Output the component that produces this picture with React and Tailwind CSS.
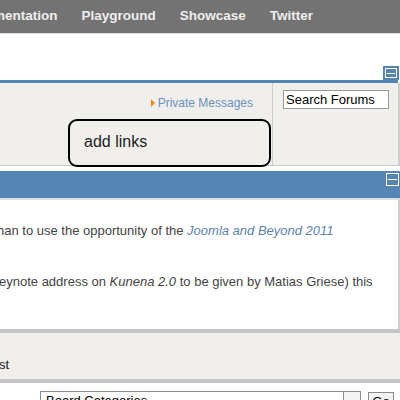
export default function App() {
  const font = { fontFamily: '"Liberation Sans", Arial, sans-serif' };
  return (
    <div className="w-[400px] h-[400px] overflow-hidden bg-white relative" style={font}>
      {/* top nav */}
      <div className="h-[33px] bg-[#737373] flex items-center gap-[24px] text-[13.5px] font-bold text-[#eeeeee] whitespace-nowrap">
        <span className="ml-[-7px]">mentation</span>
        <span>Playground</span>
        <span>Showcase</span>
        <span>Twitter</span>
      </div>
      <div className="h-px bg-[#dcdcdc]" />

      {/* white header area with minimize icon */}
      <div className="h-[46px] flex items-end justify-end">
        <div className="w-[16px] h-[14px] mr-px bg-[#5586b3] p-[2px]">
          <div className="w-full h-full border border-white flex items-center justify-center">
            <div className="w-[8px] h-px bg-white" />
          </div>
        </div>
      </div>
      <div className="h-[3px] bg-[#5586b3] mr-[2px]" />

      {/* grey panel */}
      <div className="relative flex h-[83px] bg-[#f0efeb] border-b border-[#c8c8c8] border-r-2 border-r-[#cfcfcf]">
        <div className="w-[272px] flex justify-end pr-[19px] pt-[12px]">
          <div className="flex items-center gap-[3px] h-[16px] text-[12px] text-[#6a92bd]">
            <span className="w-0 h-0 border-y-[4px] border-y-transparent border-l-[4px] border-l-[#f08a1c]" />
            <span>Private Messages</span>
          </div>
        </div>
        <div className="flex-1 border-l border-[#cccccc] pl-[10px] pt-[7px]">
          <div className="w-[106px] h-[19px] border border-[#9a9a9a] bg-white text-[13px] leading-[17px] pl-[2px] text-black">
            Search Forums
          </div>
        </div>
        {/* annotation box */}
        <div className="absolute left-[68px] top-[36px] w-[203px] h-[48px] rounded-[9px] border-2 border-black bg-[#f0efeb] flex items-center pl-[14px] pb-[2px] text-[16px] text-[#222]">
          add links
        </div>
      </div>

      <div className="h-[5px]" />

      {/* blue bar */}
      <div className="h-[27px] bg-[#5586b3] flex justify-end pt-[2px]">
        <div className="w-[13px] h-[13px] mr-px border border-white flex items-center justify-center">
          <div className="w-[9px] h-px bg-white" />
        </div>
      </div>

      {/* content */}
      <div className="h-[131px] border-t-2 border-[#dedede] border-r-2 border-r-[#cfcfcf] text-[13px] text-[#444] whitespace-nowrap">
        <div className="mt-[23px] ml-[-3px] leading-[16px]">
          han to use the opportunity of the{" "}
          <span className="italic text-[#5b84ae]">Joomla and Beyond 2011</span>
        </div>
        <div className="mt-[35px] ml-[-1px] leading-[16px]">
          eynote address on <span className="italic">Kunena 2.0</span> to be given by Matias Griese) this
        </div>
      </div>

      {/* grey section */}
      <div className="h-[54px] bg-[#f0efeb] border-y-4 border-[#c2c5c7] text-[13px] text-[#222] flex items-end pb-[5px]">
        <span className="ml-[-1px]">st</span>
      </div>

      {/* select row */}
      <div className="flex items-start pt-[8px] pl-[40px] gap-[7px]">
        <div className="w-[321px] h-[20px] border border-[#8a8a8a] flex">
          <div className="flex-1 text-[13px] text-black pl-[5px] leading-[18px]">Board Categories</div>
          <div className="w-[17px] h-full border-l border-[#8a8a8a] bg-[#f4f4f4]" />
        </div>
        <div className="w-[26px] h-[20px] mt-px border border-[#8a8a8a] bg-[#f4f4f4] text-[13px] leading-[18px] text-center text-black">Go</div>
      </div>
    </div>
  );
}
